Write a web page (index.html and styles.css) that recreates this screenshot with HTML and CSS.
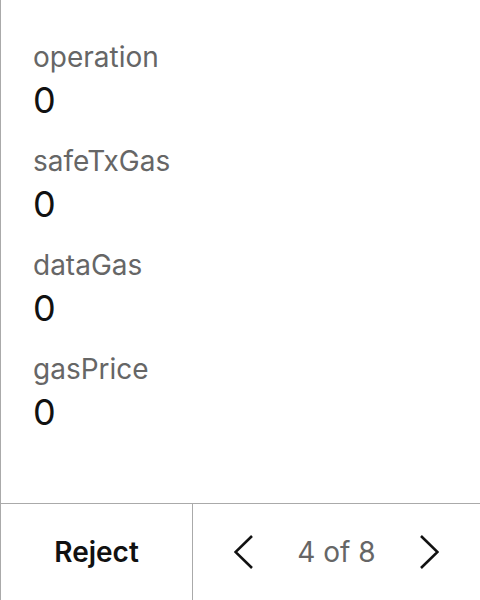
FILE: index.html
```html
<!DOCTYPE html>
<html>
<head>
<meta charset="utf-8">
<link rel="stylesheet" href="styles.css">
</head>
<body>
<div class="panel">
  <div class="fields">
    <div class="field">
      <div class="label">operation</div>
      <div class="value">0</div>
    </div>
    <div class="field">
      <div class="label">safeTxGas</div>
      <div class="value">0</div>
    </div>
    <div class="field">
      <div class="label">dataGas</div>
      <div class="value">0</div>
    </div>
    <div class="field">
      <div class="label">gasPrice</div>
      <div class="value">0</div>
    </div>
  </div>
  <div class="footer">
    <div class="reject">Reject</div>
    <div class="pager">
      <svg class="chev" width="20" height="36" viewBox="0 0 20 36"><path d="M18 2 L1.5 18 L18 34" fill="none" stroke="#111" stroke-width="2.6"/></svg>
      <span class="count">4 of 8</span>
      <svg class="chev" width="20" height="36" viewBox="0 0 20 36"><path d="M2 2 L18.5 18 L2 34" fill="none" stroke="#111" stroke-width="2.6"/></svg>
    </div>
  </div>
</div>
</body>
</html>
```

FILE: styles.css
```css
html, body {
  margin: 0;
  padding: 0;
  background: #fff;
}
body {
  font-family: Inter, "Noto Sans", sans-serif;
}
.panel {
  width: 480px;
  height: 600px;
  box-sizing: border-box;
  border-left: 1px solid #aaa;
  display: flex;
  flex-direction: column;
}
.fields {
  flex: 1;
  padding: 40px 0 0 32px;
  display: flex;
  flex-direction: column;
  gap: 22px;
}
.field {
  display: flex;
  flex-direction: column;
  gap: 4px;
}
.label {
  font-size: 28px;
  line-height: 34px;
  color: #666;
}
.value {
  font-size: 36px;
  line-height: 44px;
  color: #111;
}
.footer {
  height: 96px;
  border-top: 1px solid #aaa;
  display: flex;
}
.reject {
  width: 191px;
  border-right: 1px solid #aaa;
  display: flex;
  align-items: center;
  justify-content: center;
  font-size: 28px;
  font-weight: 600;
  color: #111;
}
.pager {
  flex: 1;
  display: flex;
  align-items: center;
  justify-content: space-between;
  padding: 0 41px;
}
.count {
  font-size: 28px;
  color: #666;
}
.chev {
  display: block;
}
```
